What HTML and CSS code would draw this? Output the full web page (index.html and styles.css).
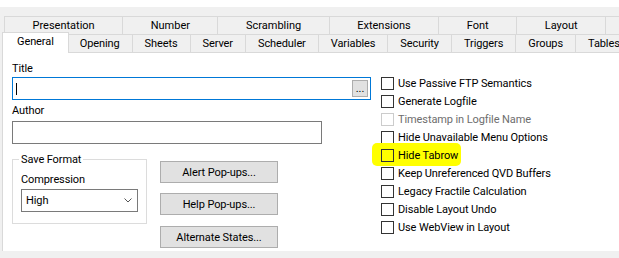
FILE: index.html
```html
<!DOCTYPE html>
<html lang="en">

<head>
    <meta charset="UTF-8">
    <meta name="viewport" content="width=device-width, initial-scale=1.0">
    <title>Document Properties</title>
    <link rel="stylesheet" href="styles.css">
</head>

<body>

    <div class="dialog">
        <div class="tab-strip">
            <div class="tab-row tab-row--back">
                <span class="tab">Presentation</span>
                <span class="tab">Number</span>
                <span class="tab">Scrambling</span>
                <span class="tab">Extensions</span>
                <span class="tab">Font</span>
                <span class="tab">Layout</span>
                <span class="tab tab--more"></span>
            </div>
            <div class="tab-row tab-row--front">
                <span class="tab tab--active">General</span>
                <span class="tab">Opening</span>
                <span class="tab">Sheets</span>
                <span class="tab">Server</span>
                <span class="tab">Scheduler</span>
                <span class="tab">Variables</span>
                <span class="tab">Security</span>
                <span class="tab">Triggers</span>
                <span class="tab">Groups</span>
                <span class="tab">Tables</span>
            </div>
        </div>

        <div class="panel">
            <div class="col-left">
                <label class="field-label" for="title">Title</label>
                <div class="text-field text-field--focus" id="title">
                    <span class="caret"></span>
                    <button class="btn-browse">...</button>
                </div>

                <label class="field-label field-label--author" for="author">Author</label>
                <div class="text-field text-field--author" id="author"></div>

                <div class="lower-row">
                    <fieldset class="group-box">
                        <legend>Save Format</legend>
                        <label class="field-label">Compression</label>
                        <div class="combo">
                            <span>High</span>
                            <svg class="combo-arrow" width="8" height="5" viewBox="0 0 8 5">
                                <polyline points="0.5,0.5 4,4 7.5,0.5" fill="none" stroke="#555" stroke-width="1" />
                            </svg>
                        </div>
                    </fieldset>

                    <div class="button-stack">
                        <button class="btn">Alert Pop-ups...</button>
                        <button class="btn">Help Pop-ups...</button>
                        <button class="btn">Alternate States...</button>
                    </div>
                </div>
            </div>

            <ul class="options">
                <li class="option"><span class="box"></span>Use Passive FTP Semantics</li>
                <li class="option"><span class="box"></span>Generate Logfile</li>
                <li class="option option--disabled"><span class="box"></span>Timestamp in Logfile Name</li>
                <li class="option"><span class="box"></span>Hide Unavailable Menu Options</li>
                <li class="option option--marked"><span class="box"></span>Hide Tabrow</li>
                <li class="option"><span class="box"></span>Keep Unreferenced QVD Buffers</li>
                <li class="option"><span class="box"></span>Legacy Fractile Calculation</li>
                <li class="option"><span class="box"></span>Disable Layout Undo</li>
                <li class="option"><span class="box"></span>Use WebView in Layout</li>
            </ul>
        </div>
    </div>

</body>

</html>
```

FILE: styles.css
```css
/* Windows style property dialog */
* {
    box-sizing: border-box;
    margin: 0;
    padding: 0;
}

html,
body {
    background-color: #fff;
}

body {
    width: 619px;
    height: 258px;
    overflow: hidden;
    font-family: Roboto, "Liberation Sans", sans-serif;
    font-size: 11px;
    letter-spacing: -0.1px;
    color: #000;
}

.dialog {
    width: 760px;
    height: 251px;
    margin-top: 7px;
    padding: 9px 0 0 2px;
    background-color: #f0f0f0;
}

/* tabs */
.tab-row {
    display: flex;
    margin-left: 2px;
    white-space: nowrap;
}

.tab {
    display: block;
    border-top: 1px solid #d9d9d9;
    border-left: 1px solid #d9d9d9;
    background-color: #f0f0f0;
    line-height: 17px;
    text-align: center;
}

.tab:last-child {
    border-right: 1px solid #d9d9d9;
}

.tab-row--back .tab {
    height: 18px;
    padding: 0 27.5px;
    letter-spacing: 0;
}

.tab-row--back .tab--more {
    width: 90px;
}

.tab-row--front .tab {
    height: 18px;
    padding: 0 12px;
}

.tab-row--front .tab.tab--active {
    position: relative;
    z-index: 1;
    height: 21px;
    margin: -2px -2px -1px -2px;
    padding: 0 14px 3px;
    border-right: 1px solid #d9d9d9;
    background-color: #fff;
}

/* page body */
.panel {
    display: flex;
    height: 199px;
    padding: 9px 0 0 9px;
    border-top: 1px solid #d9d9d9;
    border-left: 1px solid #d9d9d9;
    background-color: #fff;
}

.col-left {
    width: 359px;
    display: flex;
    flex-direction: column;
}

.field-label {
    display: block;
    line-height: 13px;
}

.field-label--author {
    margin-top: 4px;
}

.text-field {
    height: 23px;
    margin-top: 2px;
    border: 1px solid #7a7a7a;
    background-color: #fff;
}

.text-field--focus {
    display: flex;
    align-items: center;
    justify-content: space-between;
    padding: 0 2px 0 3px;
    border-color: #0078d7;
}

.text-field--author {
    width: 310px;
    margin-top: 4px;
}

.caret {
    width: 1px;
    height: 12px;
    background-color: #000;
}

.btn-browse {
    width: 16px;
    height: 17px;
    border: 1px solid #adadad;
    background-color: #e1e1e1;
    font-family: inherit;
    font-size: 11px;
    line-height: 13px;
    color: #000;
}

.lower-row {
    display: flex;
    margin-top: 9px;
}

.group-box {
    width: 135px;
    height: 71px;
    padding: 7px 8px 0;
    border: 1px solid #dcdcdc;
}

.group-box legend {
    margin-left: -2px;
    padding: 0 2px;
    line-height: 13px;
}

.combo {
    display: flex;
    align-items: center;
    justify-content: space-between;
    width: 117px;
    height: 23px;
    margin-top: 3px;
    padding: 0 5px 0 4px;
    border: 1px solid #7a7a7a;
}

.combo-arrow {
    display: block;
}

.button-stack {
    display: flex;
    flex-direction: column;
    gap: 10px;
    margin: 8px 0 0 13px;
}

.btn {
    width: 118px;
    height: 22px;
    border: 1px solid #adadad;
    background-color: #e1e1e1;
    font-family: inherit;
    font-size: 11px;
    letter-spacing: -0.1px;
    color: #000;
}

.btn + .btn + .btn {
    margin-top: 1px;
}

/* check boxes */
.options {
    list-style: none;
    margin: 12px 0 0 10px;
}

.option {
    display: flex;
    align-items: center;
    height: 18px;
    white-space: nowrap;
}

.box {
    width: 13px;
    height: 13px;
    margin-right: 4px;
    border: 1px solid #333;
}

.option--disabled {
    color: #6d6d6d;
}

.option--disabled .box {
    border-color: #cccccc;
}

.option--marked {
    position: relative;
    z-index: 0;
}

.option--marked::before {
    content: "";
    position: absolute;
    left: -9px;
    top: -3px;
    width: 89px;
    height: 23px;
    border-radius: 5px;
    background-color: #ffff00;
    z-index: -1;
}
```
